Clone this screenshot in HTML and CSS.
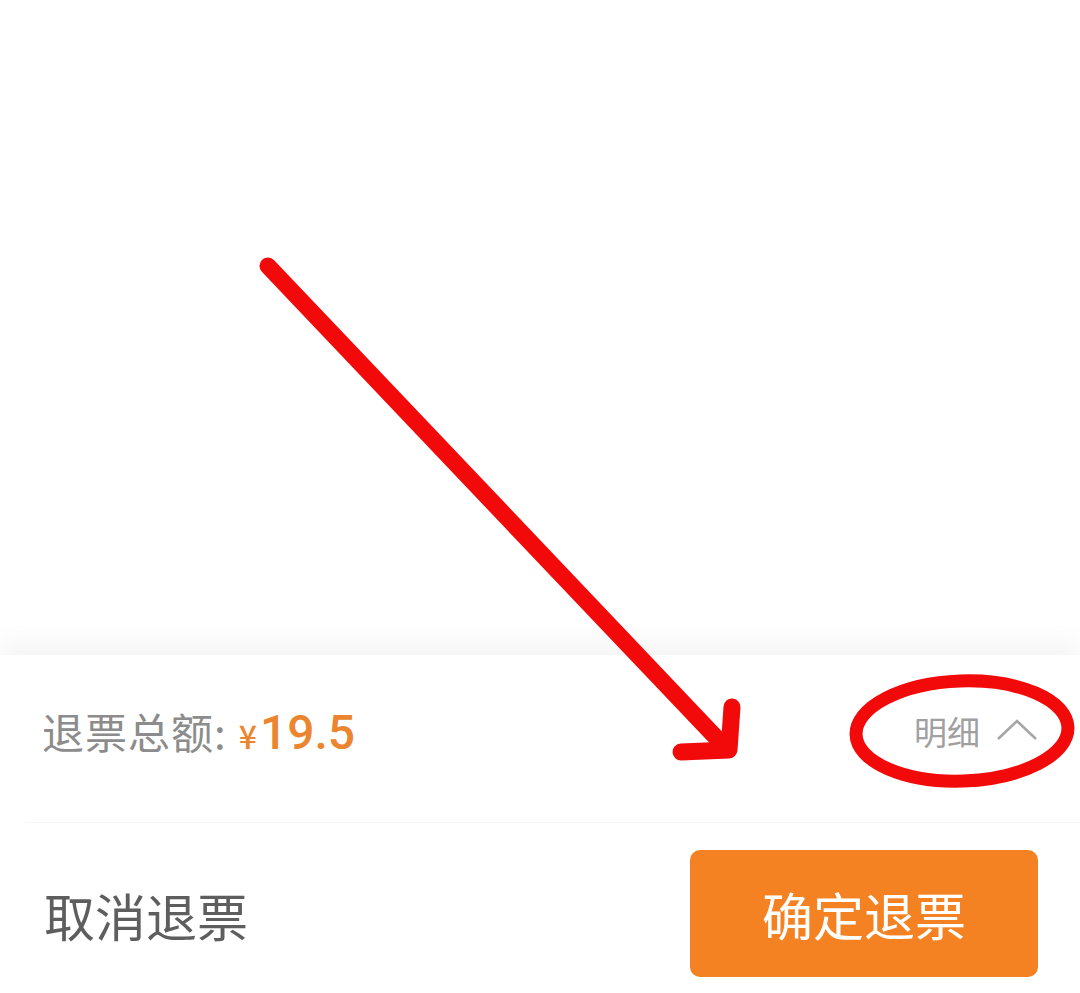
FILE: index.html
```html
<!DOCTYPE html>
<html lang="zh-CN">
<head>
<meta charset="utf-8">
<link rel="stylesheet" href="styles.css">
</head>
<body>
<div class="page">
  <div class="content"></div>
  <div class="panel">
    <div class="total-row">
      <div class="total">
        <span class="total-label">退票总额:</span>
        <span class="price"><span class="yen">¥</span>19.5</span>
      </div>
      <div class="detail">
        <span>明细</span>
        <svg class="chev" width="42" height="24" viewBox="0 0 42 24"><path d="M2 22 L21 4 L40 22" fill="none" stroke="#a6a6a6" stroke-width="2.6" stroke-linejoin="miter"/></svg>
      </div>
    </div>
    <div class="divider"></div>
    <div class="action-row">
      <span class="cancel">取消退票</span>
      <button class="confirm">确定退票</button>
    </div>
  </div>
  <svg class="annot" width="1080" height="993" viewBox="0 0 1080 993">
    <g fill="none" stroke="#f20a0a" stroke-linecap="round" stroke-linejoin="round">
      <path d="M268 266 L726 748" stroke-width="17"/>
      <path d="M732 707 L729 750 L681 752" stroke-width="17"/>
      <ellipse cx="962" cy="731" rx="106" ry="50" stroke-width="13" transform="rotate(-2 962 731)"/>
    </g>
  </svg>
</div>
</body>
</html>
```

FILE: styles.css
```css
* { box-sizing: border-box; }
html, body { margin: 0; padding: 0; background: #ffffff; }
body { font-family: "Noto Sans CJK SC", "Noto Sans", sans-serif; }
.page {
  position: relative;
  width: 1080px;
  height: 993px;
  display: flex;
  flex-direction: column;
  overflow: hidden;
}
.content { height: 655px; background: #fff; }
.panel {
  flex: 1;
  background: #fff;
  box-shadow: 0 -14px 24px rgba(0, 0, 0, 0.045);
  position: relative;
  display: flex;
  flex-direction: column;
}
.total-row {
  height: 167px;
  display: flex;
  align-items: center;
  justify-content: space-between;
  padding: 0 42px 16px 42px;
}
.total { display: flex; align-items: baseline; }
.total-label {
  font-size: 42px;
  color: #8c8c8c;
  letter-spacing: 1px;
}
.price {
  margin-left: 12px;
  font-family: "Roboto", "Noto Sans", sans-serif;
  font-size: 48px;
  font-weight: 500;
  color: #ec8530;
}
.yen { font-size: 32px; margin-right: 3px; font-family: "Noto Sans CJK SC", sans-serif; font-weight: 500; }
.detail {
  display: flex;
  align-items: center;
  gap: 16px;
  font-size: 33px;
  color: #a0a0a0;
}
.chev { margin-top: -4px; }
.divider { height: 1px; background: #f6f6f6; margin-left: 25px; }
.action-row {
  flex: 1;
  display: flex;
  align-items: flex-start;
  justify-content: space-between;
  padding: 27px 42px 0 44px;
}
.cancel {
  font-size: 51px;
  color: #5e5e5e;
  margin-top: 28px;
}
.confirm {
  width: 348px;
  height: 127px;
  border: none;
  border-radius: 10px;
  background: #f58222;
  color: #ffffff;
  font-family: "Noto Sans CJK SC", sans-serif;
  font-size: 51px;
  padding: 0;
}
.annot { position: absolute; left: 0; top: 0; pointer-events: none; }
```
